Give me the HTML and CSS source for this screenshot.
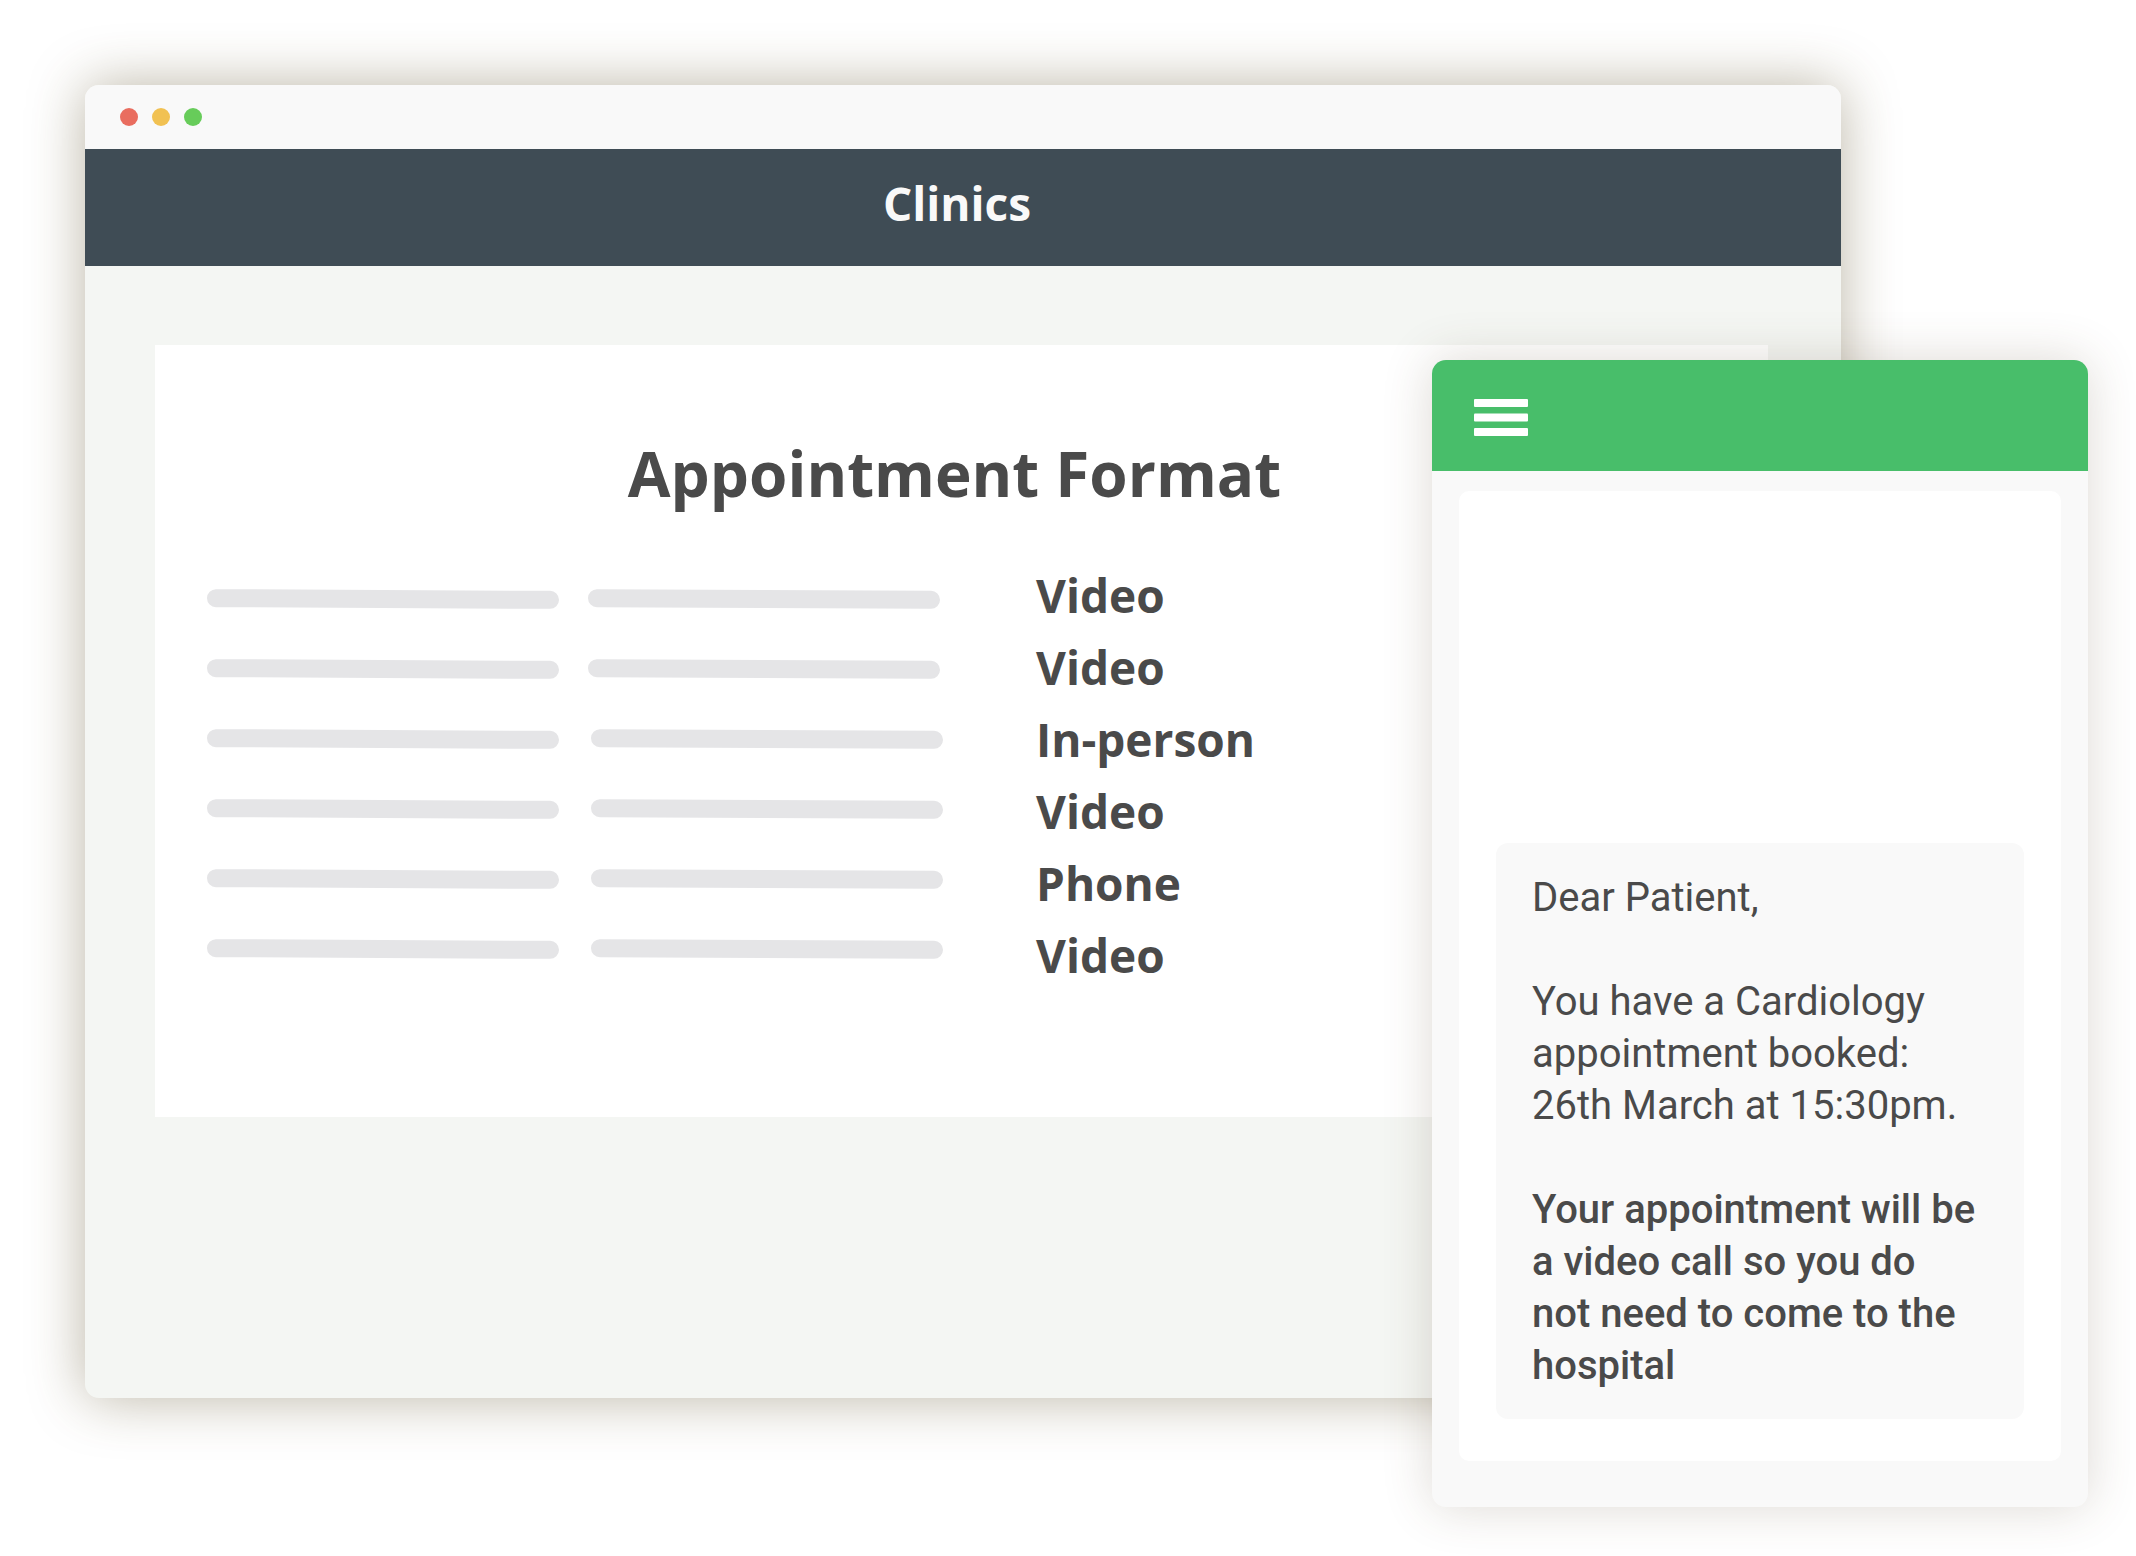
FILE: index.html
```html
<!DOCTYPE html>
<html lang="en">
<head>
<meta charset="utf-8">
<meta name="viewport" content="width=device-width, initial-scale=1">
<title>Clinics</title>
<link rel="stylesheet" href="styles.css">
</head>
<body>
<main class="stage">
  <section class="browser">
    <div class="titlebar">
      <span class="dot dot-close"></span>
      <span class="dot dot-minimise"></span>
      <span class="dot dot-expand"></span>
    </div>
    <header class="header"><h1 class="header-title">Clinics</h1></header>
    <div class="content">
      <section class="card">
        <h2 class="card-title">Appointment Format</h2>
        <div class="appointments">
          <div class="lines" aria-hidden="true">
            <div class="line-row"><span class="line"></span><span class="line"></span></div>
            <div class="line-row"><span class="line"></span><span class="line"></span></div>
            <div class="line-row"><span class="line"></span><span class="line"></span></div>
            <div class="line-row"><span class="line"></span><span class="line"></span></div>
            <div class="line-row"><span class="line"></span><span class="line"></span></div>
            <div class="line-row"><span class="line"></span><span class="line"></span></div>
          </div>
          <ul class="formats">
            <li>Video</li>
            <li>Video</li>
            <li>In-person</li>
            <li>Video</li>
            <li>Phone</li>
            <li>Video</li>
          </ul>
        </div>
      </section>
    </div>
  </section>

  <section class="phone">
    <header class="phone-header">
      <button class="menu" type="button" aria-label="Menu">
        <svg width="54" height="38" viewBox="0 0 54 38" fill="#fff" aria-hidden="true">
          <rect y="0" width="54" height="8" rx="1"/>
          <rect y="14.5" width="54" height="8" rx="1"/>
          <rect y="29" width="54" height="8" rx="1"/>
        </svg>
      </button>
    </header>
    <div class="phone-body">
      <div class="screen">
        <article class="message">
          <p>Dear Patient,</p>
          <p>You have a Cardiology<br>appointment booked:<br>26th March at 15:30pm.</p>
          <p class="strong">Your appointment will be<br>a video call so you do<br>not need to come to the<br>hospital</p>
        </article>
      </div>
    </div>
  </section>
</main>
</body>
</html>
```
FILE: styles.css
```css
* {
  box-sizing: border-box;
}

body,
h1,
h2,
p,
ul {
  margin: 0;
  padding: 0;
}

body {
  background: #fff;
  color: #4a4a4a;
  font-family: "Open Sans", sans-serif;
}

/* The phone shares the grid cell of the browser window and overlaps it. */
.stage {
  display: grid;
  min-height: 100vh;
  padding: 85px 48px 49px 85px;
}

.browser,
.phone {
  grid-area: 1 / 1;
  display: flex;
  flex-direction: column;
  border-radius: 14px;
}

.browser {
  margin: 0 247px 109px 0;
  background: #f4f6f3;
  box-shadow: 0 0 56px rgba(85, 70, 30, 0.4);
}

.titlebar {
  display: flex;
  align-items: center;
  gap: 14px;
  height: 64px;
  padding: 0 35px;
  border-radius: 14px 14px 0 0;
  background: #f9f9f9;
}

.dot {
  width: 18px;
  height: 18px;
  border-radius: 50%;
}

.dot-close {
  background: #e96d5f;
}

.dot-minimise {
  background: #f1c152;
}

.dot-expand {
  background: #67cc5a;
}

.header {
  padding: 24px 12px 33px 0;
  background: #3f4c55;
  color: #f9f9f9;
  text-align: center;
}

.header-title {
  font-size: 46px;
  font-weight: 700;
  line-height: 60px;
}

.content {
  padding: 79px 73px 79px 70px;
}

.card {
  padding: 88px 52px 126px;
  background: #fff;
}

.card-title {
  padding-right: 14px;
  font-size: 62px;
  font-weight: 700;
  line-height: 80px;
  text-align: center;
}

.appointments {
  display: flex;
  gap: 93px;
  padding-top: 46px;
}

.lines {
  display: flex;
  flex-direction: column;
  gap: 52px;
  width: 736px;
  padding-top: 31px;
}

.line-row {
  display: flex;
  gap: 29px;
}

.line-row:nth-child(n + 3) {
  gap: 32px;
}

.line {
  width: 352px;
  height: 18px;
  border-radius: 9px;
  background: #e5e5e7;
  transform: rotate(0.3deg);
}

.formats {
  list-style: none;
  font-size: 46px;
  font-weight: 700;
  line-height: 72px;
}

.phone {
  justify-self: end;
  width: 656px;
  margin-top: 275px;
  background: #f9f9f9;
  box-shadow: 0 0 50px rgba(85, 65, 40, 0.2);
}

.phone-header {
  display: flex;
  align-items: center;
  height: 111px;
  padding: 4px 42px 0;
  border-radius: 14px 14px 0 0;
  background: #48be6a;
}

.menu {
  display: block;
  padding: 0;
  border: 0;
  background: none;
}

.menu svg {
  display: block;
}

.phone-body {
  display: flex;
  flex: 1;
  padding: 20px 27px 46px;
}

.screen {
  display: flex;
  flex: 1;
  align-items: flex-end;
  padding: 37px 37px 42px;
  border-radius: 10px;
  background: #fff;
}

.message {
  display: flex;
  flex: 1;
  flex-direction: column;
  gap: 52px;
  padding: 29px 36px 27px;
  border-radius: 12px;
  background: #f9f9f9;
  font-family: Roboto, sans-serif;
  font-size: 40px;
  line-height: 52px;
}

.strong {
  font-weight: 500;
}
```
